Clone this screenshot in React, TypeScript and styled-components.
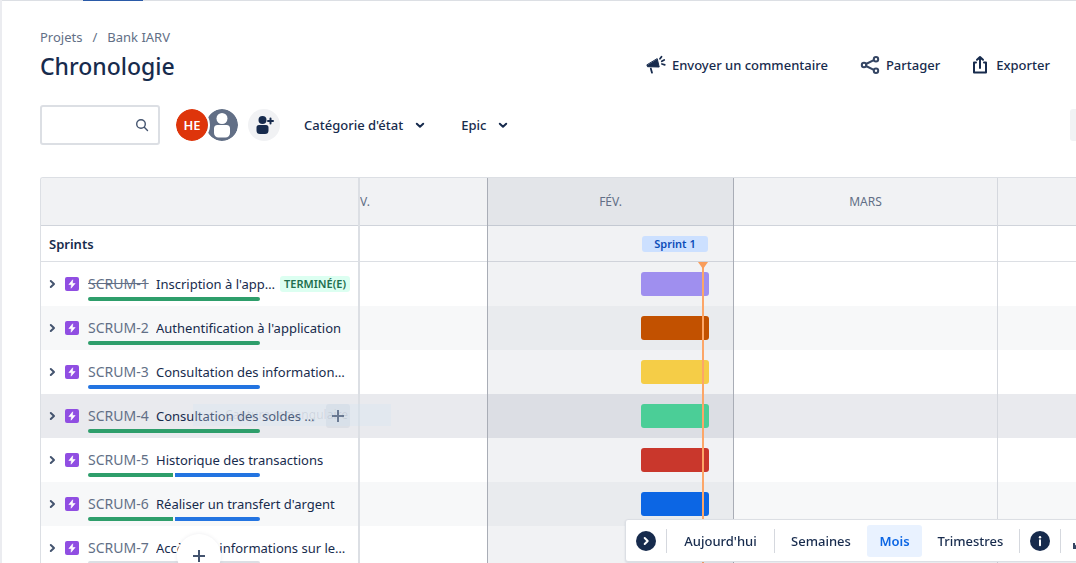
import React from "react";
import styled, { createGlobalStyle, css } from "styled-components";

const GlobalStyle = createGlobalStyle`
  *, *::before, *::after { box-sizing: border-box; }
  body {
    margin: 0;
    background: #fff;
    color: #172b4d;
    font-family: "Noto Sans", "Open Sans", sans-serif;
    font-size: 13px;
    line-height: 20px;
  }
  button, input { font: inherit; color: inherit; }
  h1, p, ol { margin: 0; padding: 0; }
`;

const line = "#dcdfe4";

const Page = styled.div`
  height: 100vh;
  overflow: hidden;
  display: flex;
  flex-direction: column;
  border-left: 2px solid #ebecf0;
`;

const NavEdge = styled.div`
  height: 1px;
  flex: none;
  background: ${line};
  padding-left: 81px;
`;

const ActiveTab = styled.div`
  width: 60px;
  height: 1px;
  background: #2a5aa8;
`;

const Header = styled.header`
  display: flex;
  justify-content: space-between;
  align-items: flex-end;
  padding: 26px 26px 0 38px;
`;

const Crumbs = styled.ol`
  display: flex;
  gap: 10px;
  list-style: none;
  color: #626f86;

  a { color: inherit; text-decoration: none; }
`;

const Title = styled.h1`
  font-size: 23px;
  line-height: 28px;
  font-weight: 500;
  margin: 5px 0 1px;
`;

const Actions = styled.div`
  display: flex;
  gap: 32px;
  padding-bottom: 6px;
`;

const GhostButton = styled.button<{ $gap?: number }>`
  display: flex;
  align-items: center;
  gap: ${(p) => p.$gap ?? 6}px;
  padding: 0;
  border: 0;
  background: none;
  font-weight: 500;
  white-space: nowrap;
  cursor: pointer;
`;

const Filters = styled.div`
  display: flex;
  align-items: center;
  padding: 24px 0 32px 38px;
`;

const SearchBox = styled.label`
  display: flex;
  align-items: center;
  width: 120px;
  height: 40px;
  padding: 0 9px;
  border: 2px solid ${line};
  border-radius: 3px;
  color: #44546f;

  input {
    flex: 1;
    min-width: 0;
    border: 0;
    outline: 0;
    background: none;
  }
`;

const People = styled.div`
  display: flex;
  align-items: center;
  margin: 0 24px 0 14px;
`;

const Avatar = styled.button<{ $tone: string; $front?: boolean }>`
  position: relative;
  z-index: ${(p) => (p.$front ? 1 : 0)};
  display: grid;
  place-items: center;
  width: 36px;
  height: 36px;
  margin-right: -6px;
  padding: 0;
  border: 2px solid #fff;
  border-radius: 50%;
  overflow: hidden;
  background: ${(p) => p.$tone};
  background-clip: padding-box;
  color: #fff;
  font-weight: 600;
`;

const AddPeople = styled.button`
  display: grid;
  place-items: center;
  width: 32px;
  height: 32px;
  margin-left: 14px;
  padding: 0;
  border: 0;
  border-radius: 50%;
  background: #f1f2f4;
`;

const FilterGroup = styled.div`
  display: flex;
  gap: 36px;
`;

const ViewSettings = styled.button`
  width: 32px;
  height: 32px;
  flex: none;
  margin-left: auto;
  margin-right: -26px;
  border: 0;
  border-radius: 3px;
  background: #f1f2f4;
`;

const Board = styled.main`
  flex: 1;
  min-height: 0;
  display: grid;
  grid-template-columns: 319px minmax(0, 1fr);
  margin-left: 38px;
  border: 1px solid ${line};
  border-width: 1px 0 0 1px;
  border-top-left-radius: 3px;
  overflow: hidden;
`;

const Sidebar = styled.section`
  position: relative;
  z-index: 1;
  border-right: 2px solid ${line};
`;

const headRow = css`
  height: 48px;
  background: #f1f2f4;
  border-bottom: 1px solid #d0d4db;
`;

const sprintRow = css`
  height: 36px;
  border-bottom: 1px solid ${line};
`;

const rowTone = { plain: "#fff", odd: "#f7f8f9", hover: "#e9eaee" };
type Tone = keyof typeof rowTone;

const HeadCell = styled.div`
  ${headRow}
`;

const SprintLabel = styled.div`
  ${sprintRow}
  padding: 8px;
  font-weight: 600;
`;

const EpicRow = styled.div<{ $tone: Tone }>`
  position: relative;
  display: flex;
  align-items: center;
  height: 44px;
  padding: 0 12px 0 5px;
  background: ${(p) => rowTone[p.$tone]};
`;

const Expander = styled.button`
  display: grid;
  place-items: center;
  width: 14px;
  height: 20px;
  margin-right: 5px;
  padding: 0;
  border: 0;
  background: none;
  color: #44546f;
`;

const EpicBody = styled.div`
  flex: 1;
  min-width: 0;
  display: flex;
  flex-direction: column;
  gap: 3px;
  margin-left: 9px;
  padding-top: 7px;
`;

const EpicText = styled.div`
  display: flex;
  align-items: center;
  height: 20px;
`;

const EpicKey = styled.a<{ $done?: boolean }>`
  width: 60px;
  margin-right: 8px;
  flex: none;
  color: #626f86;
  font-size: 14px;
  white-space: nowrap;
  text-decoration: ${(p) => (p.$done ? "line-through" : "none")};
`;

const EpicName = styled.span`
  overflow: hidden;
  text-overflow: ellipsis;
  white-space: nowrap;
`;

const DoneTag = styled.span`
  flex: none;
  margin: 0 -4px 0 4px;
  padding: 0 4px;
  border-radius: 3px;
  background: #dcfff1;
  color: #216e4e;
  font-size: 11px;
  line-height: 16px;
  font-weight: 600;
`;

const AddChild = styled.button`
  display: grid;
  place-items: center;
  flex: none;
  width: 24px;
  height: 24px;
  margin: 0 -4px 0 8px;
  padding: 0;
  border: 0;
  border-radius: 3px;
  background: #dcdfe5;
  color: #44546f;
`;

const Progress = styled.div`
  display: flex;
  gap: 2px;
  width: 172px;
  height: 4px;
  border-radius: 2px;
  overflow: hidden;
`;

const Segment = styled.span<{ $color: string }>`
  flex: 1;
  background: ${(p) => p.$color};
`;

const CaptureHint = styled.span`
  position: absolute;
  left: 152px;
  top: 10px;
  width: 198px;
  height: 22px;
  padding-left: 32px;
  background: rgba(208, 226, 246, 0.28);
  color: rgba(68, 84, 111, 0.13);
  font-size: 12px;
  line-height: 22px;
  white-space: nowrap;
  pointer-events: none;
`;

const Timeline = styled.section`
  overflow: hidden;
`;

const Track = styled.div`
  position: relative;
  height: 100%;
  min-width: 1000px;
  margin-left: -137px;
`;

const Months = styled.div`
  ${headRow}
`;

const MonthGrid = styled.div`
  position: absolute;
  inset: 0;
  display: flex;
  pointer-events: none;
`;

const Month = styled.div<{ $width: number; $current?: boolean; $strong?: boolean }>`
  flex: none;
  width: ${(p) => p.$width}px;
  padding-top: 14px;
  text-align: center;
  color: #626f86;
  font-size: 12px;
  border-right: 1px solid ${(p) => (p.$strong ? "#a9adb6" : "#d5d8de")};
  background: ${(p) => (p.$current ? "rgba(9, 30, 66, 0.06)" : "transparent")};
`;

const SprintLane = styled.div`
  ${sprintRow}
  padding: 10px 0 0 419px;
`;

const SprintPill = styled.button`
  position: relative;
  z-index: 1;
  display: block;
  width: 66px;
  height: 16px;
  padding: 0;
  border: 0;
  border-radius: 3px;
  background: #cce0ff;
  color: #0c4cb8;
  font-size: 11px;
  line-height: 16px;
  font-weight: 600;
`;

const Lane = styled.div<{ $tone: Tone }>`
  height: 44px;
  padding: 10px 0 0 418px;
  background: ${(p) => rowTone[p.$tone]};
`;

const Bar = styled.div<{ $color: string }>`
  position: relative;
  z-index: 1;
  width: 68px;
  height: 24px;
  border-radius: 3px;
  background: ${(p) => p.$color};
`;

const Today = styled.div`
  position: absolute;
  z-index: 2;
  left: 475px;
  top: 84px;
  bottom: 0;
  width: 10px;
  display: flex;
  justify-content: center;

  &::before {
    content: "";
    width: 2px;
    background: #fca668;
  }
  &::after {
    content: "";
    position: absolute;
    top: 0;
    border: 5px solid transparent;
    border-top: 7px solid #f99d5b;
    border-bottom: 0;
  }
`;

const CreateButton = styled.button`
  position: fixed;
  z-index: 3;
  left: 177px;
  bottom: -15px;
  display: grid;
  place-items: center;
  width: 44px;
  height: 44px;
  padding: 0;
  border: 0;
  border-radius: 50%;
  background: #fff;
  box-shadow: 0 0 4px rgba(9, 30, 66, 0.08);
  color: #44546f;
`;

const ZoomBar = styled.nav`
  position: fixed;
  z-index: 3;
  right: -26px;
  bottom: 1px;
  display: flex;
  align-items: center;
  height: 43px;
  width: 477px;
  padding: 0 10px;
  border: 1px solid ${line};
  border-radius: 3px;
  background: #fff;
  box-shadow: 0 1px 2px rgba(9, 30, 66, 0.12);
`;

const Divider = styled.span`
  width: 1px;
  height: 24px;
  flex: none;
  margin: 0 10px;
  background: #d5d8de;
`;

const Scales = styled.div`
  display: flex;
  gap: 10px;
`;

const Scale = styled.button<{ $width: number; $active?: boolean }>`
  flex: none;
  width: ${(p) => p.$width}px;
  height: 32px;
  padding: 0;
  border: 0;
  border-radius: 3px;
  background: ${(p) => (p.$active ? "#e9f2ff" : "none")};
  color: ${(p) => (p.$active ? "#0c66e4" : "#172b4d")};
  font-weight: ${(p) => (p.$active ? 600 : 500)};
  white-space: nowrap;
`;

const IconButton = styled.button`
  display: flex;
  flex: none;
  padding: 0;
  border: 0;
  background: none;
`;

const Chevron = ({ down = false }: { down?: boolean }) => (
  <svg width="10" height="10" viewBox="0 0 10 10" fill="none" stroke="currentColor" strokeWidth="2" strokeLinecap="round" strokeLinejoin="round">
    <path d={down ? "M1.8 3.7 5 6.7 8.2 3.7" : "M2.8 2 6 5 2.8 8"} />
  </svg>
);

const Plus = () => (
  <svg width="14" height="14" viewBox="0 0 14 14" fill="none" stroke="currentColor" strokeWidth="2">
    <path d="M7 1v12M1 7h12" />
  </svg>
);

const SearchIcon = () => (
  <svg width="14" height="14" viewBox="0 0 14 14" fill="none" stroke="currentColor" strokeWidth="1.4" strokeLinecap="round">
    <circle cx="6" cy="6" r="4.3" />
    <path d="m9.3 9.3 3.2 3.2" />
  </svg>
);

const Megaphone = () => (
  <svg width="20" height="20" viewBox="0 0 20 20" fill="#172b4d" stroke="#172b4d" strokeLinecap="round" strokeLinejoin="round">
    <path d="M11.3 4 13.2 12 1.5 11.7 1 10.2Z" strokeWidth="1" />
    <path d="M4.8 13.5 6 17.7M14 3.8 15.5 1.8M15.8 6.3 18.2 5M16 9 18.8 9.8" fill="none" strokeWidth="1.8" />
  </svg>
);

const ShareIcon = () => (
  <svg width="20" height="20" viewBox="0 0 20 20" fill="none" stroke="#344563" strokeWidth="2">
    <path d="M6 9 13.8 5.2M6 11l7.8 3.8" />
    <circle cx="4" cy="10" r="2.2" />
    <circle cx="16" cy="4.2" r="2.2" />
    <circle cx="16" cy="15.8" r="2.2" />
  </svg>
);

const ExportIcon = () => (
  <svg width="16" height="20" viewBox="0 0 16 20" fill="none" stroke="#172b4d" strokeWidth="2" strokeLinecap="round" strokeLinejoin="round">
    <path d="M4 7.5H2V17.5H14V7.5H12M8 13V2.5M5 4.8 8 2 11 4.8" />
  </svg>
);

const PersonIcon = () => (
  <svg width="32" height="32" viewBox="0 0 32 32" fill="#fff">
    <circle cx="16" cy="9.5" r="5.5" />
    <path d="M8 19.5a3.5 3.5 0 0 1 3.5-3.5h9a3.5 3.5 0 0 1 3.5 3.5V24a4.5 4.5 0 0 1-4.5 4.5h-7A4.5 4.5 0 0 1 8 24Z" />
  </svg>
);

const AddPersonIcon = () => (
  <svg width="20" height="20" viewBox="0 0 20 20" fill="#172b4d">
    <circle cx="8.5" cy="5" r="4" />
    <path d="M2.5 12.5a2.5 2.5 0 0 1 2.5-2.5h7a2.5 2.5 0 0 1 2.5 2.5v3a3.5 3.5 0 0 1-3.5 3.5H6a3.5 3.5 0 0 1-3.5-3.5Z" />
    <path d="M16.5 3.5v5M14 6h5" stroke="#172b4d" strokeWidth="2" strokeLinecap="round" />
  </svg>
);

const EpicIcon = () => (
  <svg width="14" height="14" viewBox="0 0 14 14" role="img" aria-label="Epic">
    <rect width="14" height="14" rx="2" fill="#904ee2" />
    <path d="M7.7 2.8 3.9 7.5h2.5L6.1 11.2 10.1 6.5H7.5Z" fill="#fff" stroke="#fff" strokeWidth=".6" strokeLinejoin="round" />
  </svg>
);

const NextIcon = () => (
  <svg width="20" height="20" viewBox="0 0 20 20">
    <circle cx="10" cy="10" r="10" fill="#172b4d" />
    <path d="m8.7 7 3 3-3 3" fill="none" stroke="#fff" strokeWidth="2" strokeLinecap="round" strokeLinejoin="round" />
  </svg>
);

const InfoIcon = () => (
  <svg width="20" height="20" viewBox="0 0 20 20">
    <circle cx="10" cy="10" r="10" fill="#172b4d" />
    <circle cx="10" cy="6.3" r="1.2" fill="#fff" />
    <path d="M10 9.2v5" stroke="#fff" strokeWidth="2" strokeLinecap="round" />
  </svg>
);

const CollapseIcon = () => (
  <svg width="20" height="20" viewBox="0 0 20 20" fill="none" stroke="#344563" strokeWidth="2">
    <path d="M3 12v5h5M3.500 16.500 8 12M11 4h5v5M15.500 4.500 11 9" />
  </svg>
);

const green = "#2e9e6b";
const blue = "#2374e1";

type Epic = {
  id: string;
  name: string;
  bar: string;
  progress: string[];
  tone: Tone;
  done?: boolean;
  hovered?: boolean;
};

const epics: Epic[] = [
  { id: "SCRUM-1", name: "Inscription à l'application", bar: "#9f8fef", progress: [green], tone: "plain", done: true },
  { id: "SCRUM-2", name: "Authentification à l'application", bar: "#c25100", progress: [green], tone: "odd" },
  { id: "SCRUM-3", name: "Consultation des informations du compte", bar: "#f5cd47", progress: [blue], tone: "plain" },
  { id: "SCRUM-4", name: "Consultation des soldes des comptes", bar: "#4bce97", progress: [green], tone: "hover", hovered: true },
  { id: "SCRUM-5", name: "Historique des transactions", bar: "#c9372c", progress: [green, blue], tone: "plain" },
  { id: "SCRUM-6", name: "Réaliser un transfert d'argent", bar: "#0c66e4", progress: [green, blue], tone: "odd" },
  { id: "SCRUM-7", name: "Accès aux informations sur les comptes", bar: "#9f8fef", progress: [line], tone: "plain" },
];

export default function App() {
  return (
    <Page>
      <GlobalStyle />
      <NavEdge>
        <ActiveTab />
      </NavEdge>
      <Header>
        <div>
          <Crumbs>
            <li><a href="#projets">Projets</a></li>
            <li aria-hidden="true">/</li>
            <li><a href="#bank">Bank IARV</a></li>
          </Crumbs>
          <Title>Chronologie</Title>
        </div>
        <Actions>
          <GhostButton><Megaphone />Envoyer un commentaire</GhostButton>
          <GhostButton><ShareIcon />Partager</GhostButton>
          <GhostButton $gap={8}><ExportIcon />Exporter</GhostButton>
        </Actions>
      </Header>

      <Filters>
        <SearchBox>
          <input type="text" aria-label="Rechercher" />
          <SearchIcon />
        </SearchBox>
        <People>
          <Avatar $tone="#de350b" $front>HE</Avatar>
          <Avatar $tone="#626f86" aria-label="Non assigné"><PersonIcon /></Avatar>
          <AddPeople aria-label="Ajouter des personnes"><AddPersonIcon /></AddPeople>
        </People>
        <FilterGroup>
          <GhostButton $gap={12}>Catégorie d'état<Chevron down /></GhostButton>
          <GhostButton $gap={12}>Epic<Chevron down /></GhostButton>
        </FilterGroup>
        <ViewSettings aria-label="Paramètres" />
      </Filters>

      <Board>
        <Sidebar>
          <HeadCell />
          <SprintLabel>Sprints</SprintLabel>
          {epics.map((e) => (
            <EpicRow key={e.id} $tone={e.tone}>
              <Expander aria-label="Développer"><Chevron /></Expander>
              <EpicIcon />
              <EpicBody>
                <EpicText>
                  <EpicKey href={`#${e.id}`} $done={e.done}>{e.id}</EpicKey>
                  <EpicName>{e.name}</EpicName>
                  {e.done && <DoneTag>TERMINÉ(E)</DoneTag>}
                  {e.hovered && <AddChild aria-label="Créer un ticket enfant"><Plus /></AddChild>}
                </EpicText>
                <Progress>
                  {e.progress.map((c) => <Segment key={c} $color={c} />)}
                </Progress>
              </EpicBody>
              {e.hovered && <CaptureHint>Capture rectangulaire</CaptureHint>}
            </EpicRow>
          ))}
        </Sidebar>
        <Timeline>
          <Track>
            <Months />
            <SprintLane><SprintPill>Sprint 1</SprintPill></SprintLane>
            {epics.map((e) => (
              <Lane key={e.id} $tone={e.tone}><Bar $color={e.bar} /></Lane>
            ))}
            <MonthGrid>
              <Month $width={265} $strong>JANV.</Month>
              <Month $width={246} $strong $current>FÉV.</Month>
              <Month $width={264}>MARS</Month>
            </MonthGrid>
            <Today />
          </Track>
        </Timeline>
      </Board>

      <CreateButton aria-label="Créer"><Plus /></CreateButton>
      <ZoomBar aria-label="Échelle">
        <IconButton aria-label="Suivant"><NextIcon /></IconButton>
        <Divider />
        <Scale $width={87}>Aujourd'hui</Scale>
        <Divider />
        <Scales>
          <Scale $width={72}>Semaines</Scale>
          <Scale $width={55} $active>Mois</Scale>
          <Scale $width={77}>Trimestres</Scale>
        </Scales>
        <Divider />
        <IconButton aria-label="Légende"><InfoIcon /></IconButton>
        <Divider />
        <IconButton aria-label="Réduire"><CollapseIcon /></IconButton>
      </ZoomBar>
    </Page>
  );
}
